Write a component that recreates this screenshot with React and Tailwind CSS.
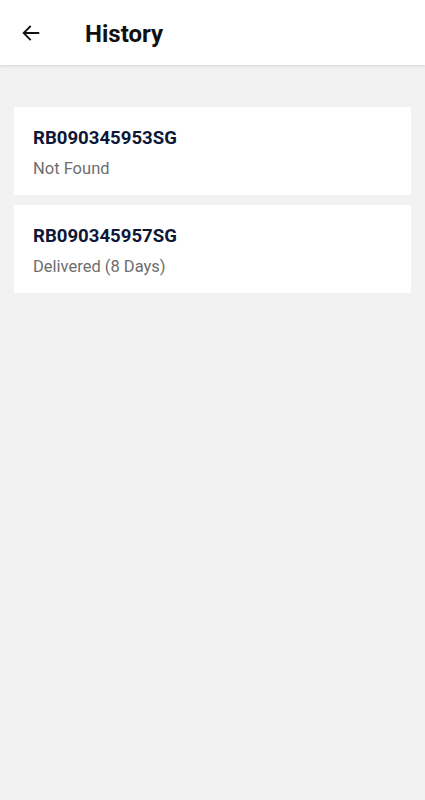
const items = [
  { code: "RB090345953SG", status: "Not Found" },
  { code: "RB090345957SG", status: "Delivered (8 Days)" },
];

const ArrowLeft = () => (
  <svg width="22" height="22" viewBox="0 0 24 24" fill="none">
    <path
      d="M20 12H4.5M11 5l-7 7 7 7"
      stroke="#111"
      strokeWidth="2"
      strokeLinecap="square"
    />
  </svg>
);

export default function App() {
  return (
    <div className="min-h-[800px] bg-[#f2f2f2] font-['Roboto',sans-serif]">
      {/* Header */}
      <header className="h-[65px] bg-white flex items-center shadow-[0_1px_3px_rgba(0,0,0,0.12)]">
        <button className="ml-[20px] w-[22px] h-[22px] flex items-center justify-center">
          <ArrowLeft />
        </button>
        <h1 className="ml-[43px] mt-[2px] text-[24px] font-bold text-[#111] leading-none">
          History
        </h1>
      </header>

      {/* List */}
      <div className="px-[14px] pt-[42px] flex flex-col gap-[10px]">
        {items.map((item) => (
          <div
            key={item.code}
            className="h-[88px] bg-white pl-[19px] pt-[4px] flex flex-col justify-center"
          >
            <p className="text-[18.6px] font-bold text-[#0d1838] leading-[24px]">
              {item.code}
            </p>
            <p className="text-[16.5px] text-[#6e6e6e] leading-[22px] mt-[8px]">
              {item.status}
            </p>
          </div>
        ))}
      </div>
    </div>
  );
}
